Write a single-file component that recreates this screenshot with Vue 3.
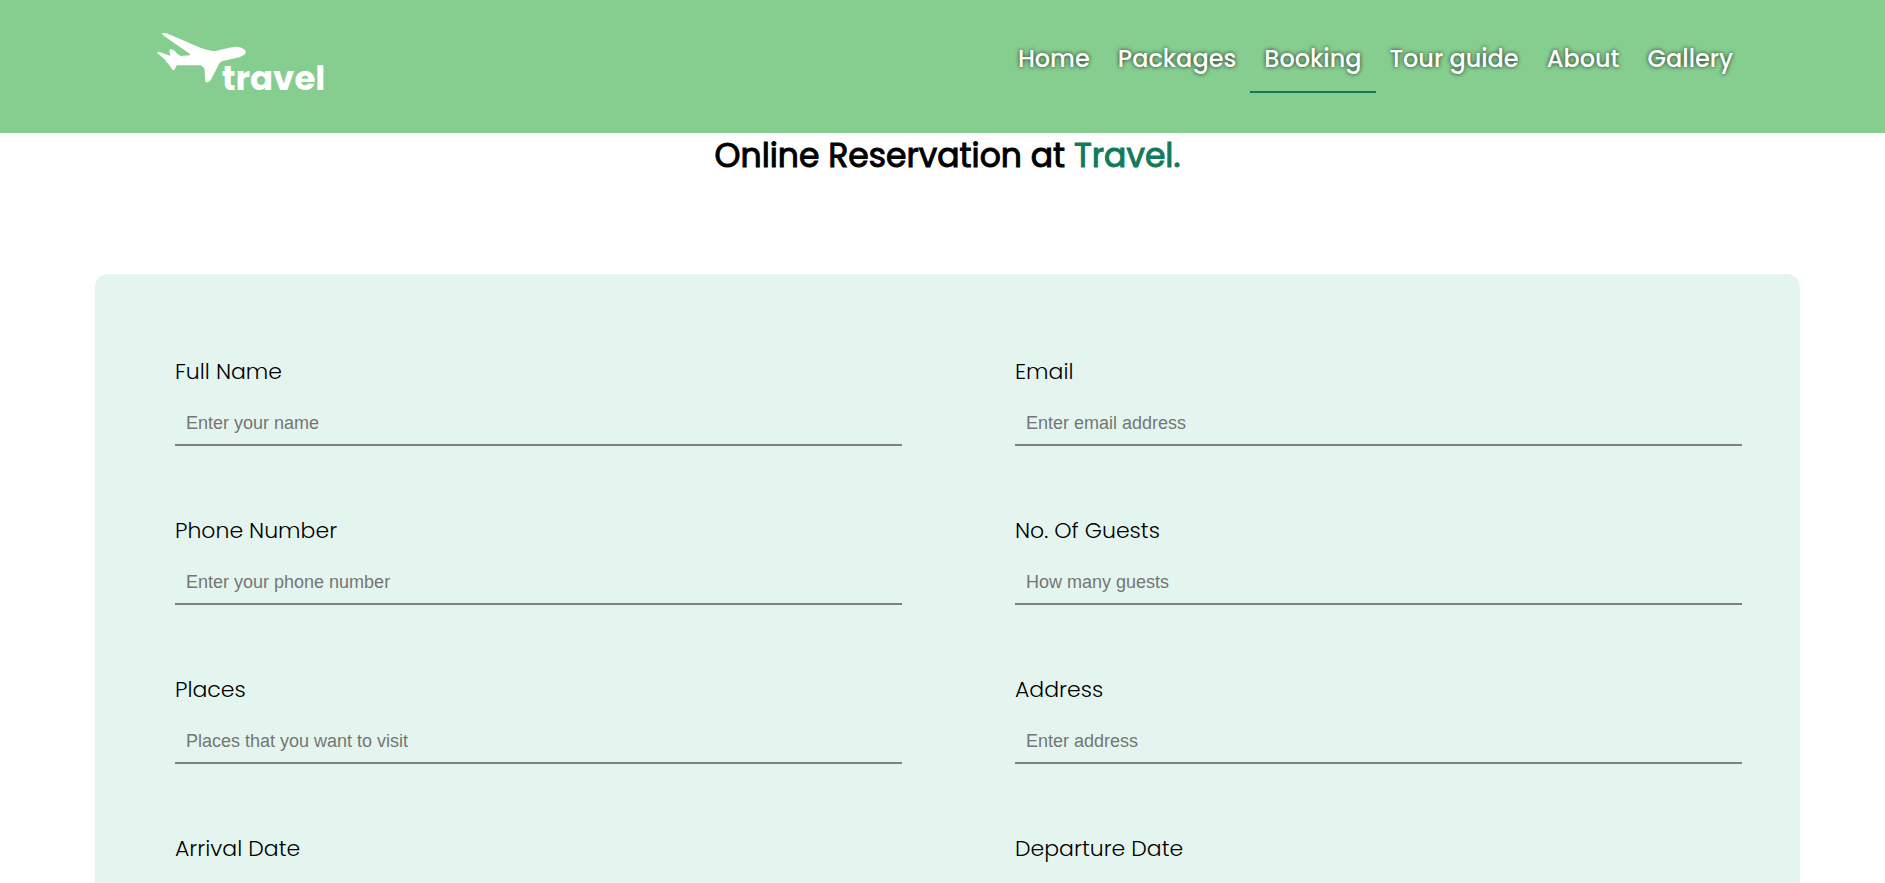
<script setup>
const links = [
  { label: 'Home' },
  { label: 'Packages' },
  { label: 'Booking', active: true },
  { label: 'Tour guide' },
  { label: 'About' },
  { label: 'Gallery' },
]

const fields = [
  { id: 'name', label: 'Full Name', type: 'text', placeholder: 'Enter your name' },
  { id: 'email', label: 'Email', type: 'email', placeholder: 'Enter email address' },
  { id: 'phone', label: 'Phone Number', type: 'tel', placeholder: 'Enter your phone number' },
  { id: 'guests', label: 'No. Of Guests', type: 'text', placeholder: 'How many guests' },
  { id: 'places', label: 'Places', type: 'text', placeholder: 'Places that you want to visit' },
  { id: 'address', label: 'Address', type: 'text', placeholder: 'Enter address' },
  { id: 'arrival', label: 'Arrival Date', type: 'date' },
  { id: 'departure', label: 'Departure Date', type: 'date' },
]
</script>

<template>
  <div class="page">
    <header class="header">
      <a class="logo" href="#" aria-label="travel">
        <svg viewBox="48 36 540 240" width="180" height="80">
          <path
            class="plane"
            d="M67 40 Q74 37 85 42 L183 84 Q203 91 222 94 L262 85 Q276 80 290 80 Q303 81 312 88 Q321 96 315 102 Q309 108 298 112 L258 121 Q244 123 238 130 L233 140 L212 180 Q207 189 198 187 Q194 186 195 178 L194 149 Q192 140 182 136 L112 136 Q107 138 106 145 Q104 151 99 151 Q96 149 94 144 L84 130 L78 126 Q80 122 72 116 L52 100 Q50 95 55 95 Q60 96 65 98 L90 107 Q92 103 88 96 Q86 90 91 88 Q99 87 104 93 Q112 104 122 108 L151 106 Q148 99 137 93 L69 46 Q65 43 67 40Z"
          />
          <text class="wordmark" x="245" y="209">travel</text>
        </svg>
      </a>
      <nav class="nav">
        <a
          v-for="link in links"
          :key="link.label"
          href="#"
          class="nav-link"
          :class="{ active: link.active }"
        >{{ link.label }}</a>
      </nav>
    </header>

    <main class="booking">
      <h1 class="title">Online Reservation at <span>Travel.</span></h1>
      <form class="card">
        <div v-for="field in fields" :key="field.id" class="field">
          <label :for="field.id">{{ field.label }}</label>
          <input :id="field.id" :type="field.type" :placeholder="field.placeholder" />
        </div>
      </form>
    </main>
  </div>
</template>

<style>
body {
  background: #fff;
}
</style>

<style scoped>
.page {
  height: 100vh;
  overflow: hidden;
  color: #000;
  font-family: Poppins, Inter, "Liberation Sans", sans-serif;
}

.header {
  display: flex;
  justify-content: space-between;
  align-items: flex-start;
  height: 133px;
  box-sizing: border-box;
  padding: 32px 138px 0 156px;
  background: #86ce8f;
}

.logo svg {
  display: block;
}

.plane,
.wordmark {
  fill: #fff;
}

.wordmark {
  font-weight: 700;
  font-size: 102px;
}

.nav {
  display: flex;
}

.nav-link {
  box-sizing: border-box;
  height: 61px;
  padding: 8px 14px 0;
  border-bottom: 2px solid transparent;
  color: #fff;
  font-size: 24px;
  font-weight: 500;
  line-height: 38px;
  text-decoration: none;
  text-shadow: 0 0 4px rgba(0, 0, 0, 0.8);
}

.nav-link.active {
  border-bottom-color: #117a5b;
}

.booking {
  padding: 0 85px 0 95px;
}

.title {
  margin: 0 0 95px;
  font-size: 33px;
  font-weight: 400;
  line-height: 46px;
  text-align: center;
  -webkit-text-stroke: 1px currentColor;
}

.title span {
  color: #117a5b;
}

.card {
  display: grid;
  grid-template-columns: 1fr 1fr;
  gap: 70px 113px;
  padding: 83px 58px 80px 80px;
  border-radius: 13px;
  background: #e4f5ef;
}

.field {
  display: flex;
  flex-direction: column;
}

.field label {
  font-size: 22px;
  font-weight: 300;
  line-height: 30px;
}

.field input {
  box-sizing: border-box;
  width: 100%;
  height: 47px;
  margin-top: 12px;
  padding: 3px 11px 0;
  border: 0;
  border-bottom: 2px solid #808080;
  outline: 0;
  background: transparent;
  color: #000;
  font-family: "Liberation Sans", Arial, sans-serif;
  font-size: 18px;
}

.field input::placeholder {
  color: #757575;
}
</style>
